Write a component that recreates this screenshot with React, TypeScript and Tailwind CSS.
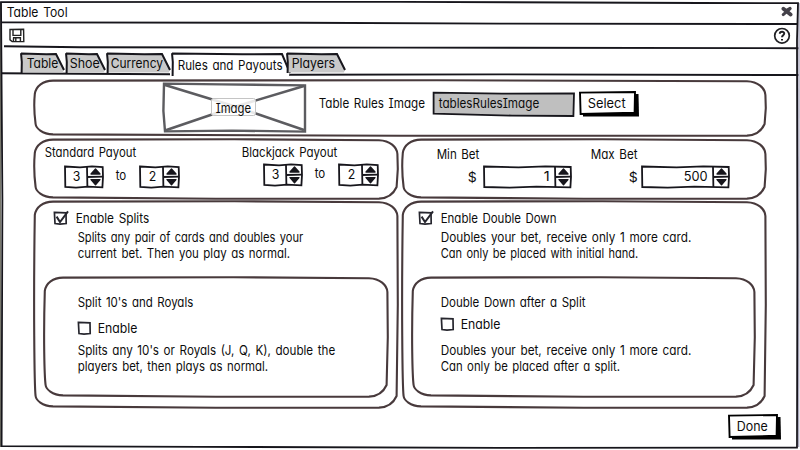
import { useLayoutEffect, useRef, useState, type ReactNode } from "react";

const INK = "#17161c";
const FRAME = "#483a3c";

/* A single line of text, condensed or widened to fill the width of its box. */
function Label({ className, children }: { className: string; children: string }) {
  const box = useRef<HTMLSpanElement>(null);
  const text = useRef<HTMLSpanElement>(null);
  const [scale, setScale] = useState(1);
  useLayoutEffect(() => {
    if (box.current && text.current) {
      setScale((box.current.clientWidth - 1.4) / text.current.offsetWidth);
    }
  }, [children]);
  return (
    <span ref={box} className={`block h-4 shrink-0 whitespace-pre leading-[17px] ${className}`}>
      <span ref={text} className="inline-block origin-left leading-4" style={{ transform: `translateX(0.7px) scaleX(${scale})` }}>
        {children}
      </span>
    </span>
  );
}

/* Hand-drawn rounded outline around a group of controls. */
function Panel({ w, h, className, children }: { w: number; h: number; className: string; children: ReactNode }) {
  const d = [
    `M20 1.6 L${w * 0.55} 1.2 L${w - 20} 2.2`,
    `C${w - 9} 2.6 ${w - 2} 9 ${w - 1.6} 16`,
    `L${w - 1.2} ${h * 0.5} L${w - 2.4} ${h - 13}`,
    `C${w - 6} ${h - 5} ${w - 13} ${h - 1.6} ${w - 20} ${h - 1.4}`,
    `L${w * 0.5} ${h - 1.2} L20 ${h - 2.6}`,
    `C9 ${h - 3} 3 ${h - 9} 2.6 ${h - 13}`,
    `C1.4 ${h - 22} 0.4 ${h * 0.5} 1.8 15`,
    `C3 7 10 1.8 20 1.6 Z`,
  ].join(" ");
  return (
    <section className={`relative ${className}`}>
      <svg className="pointer-events-none absolute inset-0" width={w} height={h} fill="none" stroke={FRAME}>
        <path d={d} strokeWidth="2.1" strokeLinejoin="round" />
      </svg>
      {children}
    </section>
  );
}

function Spinner({ w, className, children }: { w: number; className: string; children: ReactNode }) {
  const s = w - 17;
  return (
    <div className={`relative flex h-6 shrink-0 ${className}`}>
      <svg className="absolute inset-0" width={w} height="24" fill="none" stroke={INK} strokeWidth="1.8">
        <path d={`M1 1.5 L${w * 0.4} 2.4 L${w * 0.7} 1.3 L${w - 1.3} 2 L${w - 1} 12 L${w - 1.6} 22.3 L${w * 0.6} 21.6 L${w * 0.3} 22.6 L1.3 22 Z`} />
        <path d={`M${s} 2 L${s + 0.4} 22 M${s} 12 L${w - 1} 11.6`} />
        <path d={`M${s + 8.5} 4 L${s + 13} 9 L${s + 4} 9 Z M${s + 4} 14.6 L${s + 13} 14.6 L${s + 8.5} 19.8 Z`} fill={INK} strokeWidth="1.3" strokeLinejoin="round" />
      </svg>
      {children}
    </div>
  );
}

function Checkbox({ checked }: { checked?: boolean }) {
  return (
    <svg className="shrink-0" width="16" height="16" fill="none" stroke="#26262e" strokeWidth="1.7">
      <path d="M1.4 2.4 L13 2.8 L13.2 13.6 L7 14.2 L2 13.6 Z" />
      {checked && <path d="M3.6 6.6 L7 12 L15 1.4" strokeWidth="2" />}
    </svg>
  );
}

function Tab({ w, active, className, children }: { w: number; active?: boolean; className: string; children: ReactNode }) {
  const b = active ? 23.5 : 20.5;
  return (
    <div className={`relative h-7 shrink-0 ${className}`}>
      <svg className="absolute inset-0 overflow-visible" width={w} height="28" fill="none">
        <path d={`M2 1.8 L${w - 8} 2.4 L${w} ${b - 4} L${w - 1} ${b} L2 ${b} Z`} fill={active ? "#fff" : "#c9c9c9"} />
        <path d={`M1.6 ${b + 0.5} L1.8 10 L1 1.2 M1 1.6 L${w * 0.6} 2.3 L${w - 8} 2 L${w} ${b - 2.5}`} stroke={INK} strokeWidth="2" />
      </svg>
      {children}
    </div>
  );
}

function Button({ w, className, children }: { w: number; className: string; children: ReactNode }) {
  return (
    <button className={`relative block h-[26px] shrink-0 pb-[2px] text-left ${className}`}>
      <svg className="absolute inset-0" width={w} height="26">
        <path d={`M4 4 L${w - 0.5} 3 L${w} 25.6 L4 25.6 Z`} fill="#000" />
        <path d={`M1 1.6 L${w - 4} 1 L${w - 4.4} 21.8 L1.6 23 Z`} fill="#fff" stroke="#000" strokeWidth="1.9" />
      </svg>
      {children}
    </button>
  );
}

/* Slightly crooked rule under a bar of the window. */
function Rule({ d }: { d: string }) {
  return (
    <svg className="pointer-events-none absolute inset-0 overflow-visible" width="800" height="24" fill="none">
      <path d={d} stroke={INK} strokeWidth="1.9" />
    </svg>
  );
}

function TitleBar() {
  return (
    <header className="relative flex h-[23px] items-start justify-between pl-[6px] pr-[7px] pt-1">
      <Rule d="M1 22.4 L300 22.8 L500 23.6 L798 24" />
      <Label className="w-[62px]">Table Tool</Label>
      <svg className="mt-[2px]" width="12" height="12" fill="none" stroke="#444149" strokeLinecap="round">
        <path d="M2.4 2.8 L9.6 8.6" strokeWidth="3.8" />
        <path d="M9.2 2.6 L2.2 8.6 M6 4 L9 2.4" strokeWidth="3" />
      </svg>
    </header>
  );
}

function Toolbar() {
  return (
    <div className="relative flex h-6 items-start justify-between pl-[9px] pr-[9px]">
      <Rule d="M4 23.2 L80 24.3 L400 24.6 L799 25.2" />
      <svg className="mt-[5px]" width="16" height="16" fill="none" stroke="#222" strokeWidth="1.4">
        <path d="M1 1.5 L14.6 1.2 L14.8 13.6 L3.2 13.6 L1 11.8 Z" />
        <path d="M4 1.4 L4 7.4 L11.8 7.4 L11.8 1.4" />
        <path d="M4.4 13.4 L4.6 9.8 L11.4 9.8 L11.4 13.4 M6.8 10 L6.8 13.4" />
      </svg>
      <svg className="mt-[4px]" width="18" height="18" fill="none" stroke="#202024">
        <circle cx="9" cy="8.8" r="7.3" strokeWidth="1.7" />
        <path d="M6.8 6.8 C6.8 3.9 11.4 4 11.2 6.7 C11 8.3 9 8.3 9 10.3 M9 12 L9 13.6" strokeWidth="2" />
      </svg>
    </div>
  );
}

function Tabs() {
  return (
    <nav className="relative flex h-7 items-start pl-5 pt-[5px]">
      <svg className="pointer-events-none absolute inset-0 overflow-visible" width="800" height="28" fill="none" stroke={INK}>
        <path d="M0 26.2 L80 26.8 L170 27.2" strokeWidth="1.9" />
        <path d="M289 27.8 L500 27.4 L799 28" strokeWidth="1.9" />
      </svg>
      <Tab w={44} className="w-[45px] pl-[6px] pt-[3px]">
        <Label className="relative w-[33px]">Table</Label>
      </Tab>
      <Tab w={40} className="w-[41px] pl-[4px] pt-[3px]">
        <Label className="relative w-[31px]">Shoe</Label>
      </Tab>
      <Tab w={64} className="w-[65px] pl-[4px] pt-[3px]">
        <Label className="relative w-[54px]">Currency</Label>
      </Tab>
      <Tab w={119} active className="w-[115px] pl-[6px] pt-[5px]">
        <Label className="relative w-[106px]">Rules and Payouts</Label>
      </Tab>
      <Tab w={59} className="w-[60px] pl-[5px] pt-[3px]">
        <Label className="relative w-[45px]">Players</Label>
      </Tab>
    </nav>
  );
}

function ImagePanel() {
  return (
    <Panel w={734} h={58} className="flex h-[58px] w-[734px] items-start pl-[129px]">
      <div className="relative mt-[2px] h-[54px] w-[145px] shrink-0">
        <svg className="absolute inset-0" width="145" height="54" fill="none" stroke="#5c5c60">
          <path d="M2 2.6 L60 3.4 L143 4.4 L143 50.6 L70 49.6 L3 50.4 L1.4 30 Z" strokeWidth="2.4" />
          <path d="M3 4 L70 24.5 L142 49 M3 49.6 L72 26 L142 5" strokeWidth="2.6" />
          <rect x="49.5" y="17.5" width="44" height="17" rx="2" fill="#fff" fillOpacity="0.86" stroke="#c4c4c4" />
        </svg>
        <Label className="relative ml-[53px] mt-[19px] w-[37px]">Image</Label>
      </div>
      <Label className="ml-[11px] mt-[16px] w-[108px]">Table Rules Image</Label>
      <div className="relative ml-[6px] mt-[12px] h-[27px] w-[145px] shrink-0 pl-[6px] pt-1">
        <svg className="absolute inset-0" width="145" height="27">
          <path d="M1.6 1.6 L70 2.6 L142 2.4 L141.4 25 L80 24.6 L1.6 22.6 Z" fill="#bfbfbf" stroke={INK} strokeWidth="1.8" />
        </svg>
        <Label className="relative w-[102px]">tablesRulesImage</Label>
      </div>
      <Button w={60} className="ml-[2px] mt-[12px] w-[60px]">
        <Label className="relative ml-2 w-[39px]">Select</Label>
      </Button>
    </Panel>
  );
}

function Ratio({ className }: { className: string }) {
  return (
    <div className={`flex ${className}`}>
      <Spinner w={40} className="w-[40px] pl-[8px] pt-[3px]">
        <Label className="relative w-[9px]">3</Label>
      </Spinner>
      <Label className="ml-[11px] mt-[2px] w-[12px]">to</Label>
      <Spinner w={41} className="ml-[12px] w-[41px] pl-[9px] pt-[3px]">
        <Label className="relative w-[9px]">2</Label>
      </Spinner>
    </div>
  );
}

function PayoutPanel() {
  return (
    <Panel w={366} h={62} className="flex h-[62px] w-[366px] pl-[11px] pt-[6px]">
      <div className="w-[197px]">
        <Label className="w-[93px]">Standard Payout</Label>
        <Ratio className="ml-[20px] mt-[5px]" />
      </div>
      <div>
        <Label className="w-[97px]">Blackjack Payout</Label>
        <Ratio className="ml-[22px] mt-[3px]" />
      </div>
    </Panel>
  );
}

function BetPanel() {
  return (
    <Panel w={366} h={62} className="flex h-[62px] w-[366px] pl-[35px] pt-[8px]">
      <div className="w-[154px]">
        <Label className="w-[44px]">Min Bet</Label>
        <div className="mt-[3px] flex pl-[31px]">
          <Label className="mt-[4px] w-[10px]">$</Label>
          <Spinner w={89} className="ml-[6px] w-[89px] pl-[60px] pt-[3px]">
            <Label className="relative w-[7px]">1</Label>
          </Spinner>
        </div>
      </div>
      <div>
        <Label className="w-[48px]">Max Bet</Label>
        <div className="mt-[3px] flex pl-[38px]">
          <Label className="mt-[4px] w-[10px]">$</Label>
          <Spinner w={89} className="ml-[3px] w-[89px] pl-[42px] pt-[3px]">
            <Label className="relative w-[25px]">500</Label>
          </Spinner>
        </div>
      </div>
    </Panel>
  );
}

function SplitPanel() {
  return (
    <Panel w={366} h={209} className="h-[209px] w-[366px] pl-[10px] pt-[10px]">
      <div className="flex pl-[10px]">
        <Checkbox checked />
        <Label className="ml-[6px] w-[75px]">Enable Splits</Label>
      </div>
      <div className="mt-[3px] pl-[34px]">
        <Label className="w-[227px]">Splits any pair of cards and doubles your</Label>
        <Label className="w-[214px]">current bet. Then you play as normal.</Label>
      </div>
      <Panel w={346} h={122} className="mt-[15px] h-[122px] w-[346px] pl-[34px] pt-[18px]">
        <Label className="w-[117px]">Split 10's and Royals</Label>
        <div className="mt-[10px] flex">
          <Checkbox />
          <Label className="ml-[4px] w-[41px]">Enable</Label>
        </div>
        <Label className="mt-[6px] w-[259px]">Splits any 10's or Royals (J, Q, K), double the</Label>
        <Label className="w-[192px]">players bet, then plays as normal.</Label>
      </Panel>
    </Panel>
  );
}

function DoublePanel() {
  return (
    <Panel w={366} h={209} className="h-[209px] w-[366px] pl-[10px] pt-[10px]">
      <div className="flex pl-[7px]">
        <Checkbox checked />
        <Label className="ml-[6px] w-[117px]">Enable Double Down</Label>
      </div>
      <div className="mt-[3px] pl-[29px]">
        <Label className="w-[252px]">Doubles your bet, receive only 1 more card.</Label>
        <Label className="w-[199px]">Can only be placed with initial hand.</Label>
      </div>
      <Panel w={345} h={122} className="mt-[15px] h-[122px] w-[345px] pl-[29px] pt-[18px]">
        <Label className="w-[146px]">Double Down after a Split</Label>
        <div className="mt-[6px] flex">
          <Checkbox />
          <Label className="ml-[4px] w-[41px]">Enable</Label>
        </div>
        <Label className="mt-[10px] w-[252px]">Doubles your bet, receive only 1 more card.</Label>
        <Label className="w-[181px]">Can only be placed after a split.</Label>
      </Panel>
    </Panel>
  );
}

export default function App() {
  return (
    <div className="relative flex h-[450px] w-[800px] flex-col overflow-hidden bg-white font-['Inter',sans-serif] text-[13px] text-[#0c0c0c] [font-feature-settings:'cv11','cv08'] [word-spacing:1.5px]">
      <TitleBar />
      <Toolbar />
      <Tabs />
      <main className="flex flex-col pl-[33px] pt-1">
        <ImagePanel />
        <div className="mt-[1px] flex gap-[2px]">
          <PayoutPanel />
          <BetPanel />
        </div>
        <div className="flex gap-[2px]">
          <SplitPanel />
          <DoublePanel />
        </div>
        <div className="mt-[5px] flex justify-end pr-[19px]">
          <Button w={53} className="w-[53px]">
            <Label className="relative ml-2 w-[32px]">Done</Label>
          </Button>
        </div>
      </main>
      <svg className="pointer-events-none absolute inset-0" width="800" height="450" fill="none">
        <path d="M0.5 2 L0.5 447" stroke="#77776c" />
        <path d="M799 3 L798.6 447" stroke="#aaa8bd" strokeWidth="1.4" />
        <path d="M1 2.2 L400 1.8 L700 3 L798 3.2 L797 40 L797.4 250 L797 447.6 L500 447.8 L200 446.8 L1.6 446.2 L2.4 200 Z" stroke={INK} strokeWidth="1.8" />
      </svg>
    </div>
  );
}
